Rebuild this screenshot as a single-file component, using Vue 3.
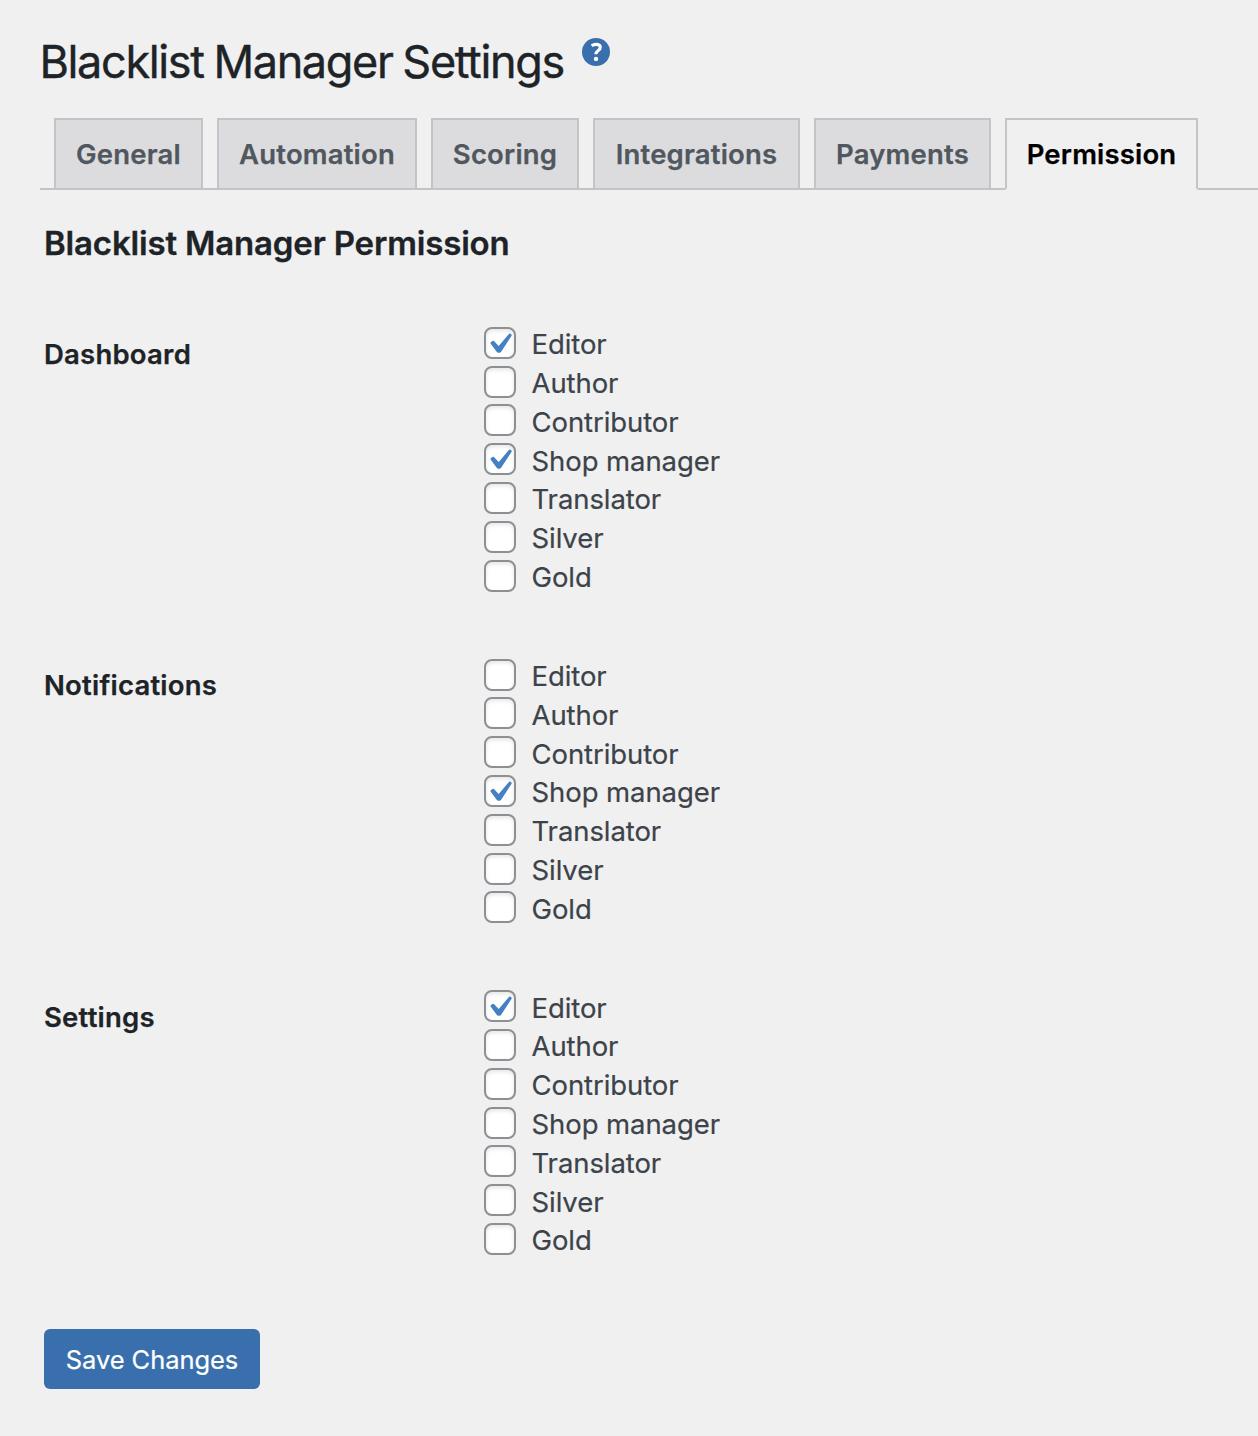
<script setup>
import { reactive } from 'vue'

const tabs = [
  { label: 'General', width: 149 },
  { label: 'Automation', width: 200 },
  { label: 'Scoring', width: 148 },
  { label: 'Integrations', width: 207 },
  { label: 'Payments', width: 177 },
  { label: 'Permission', width: 193, active: true },
]

const roles = ['Editor', 'Author', 'Contributor', 'Shop manager', 'Translator', 'Silver', 'Gold']

const sections = reactive([
  { title: 'Dashboard', allowed: ['Editor', 'Shop manager'] },
  { title: 'Notifications', allowed: ['Shop manager'] },
  { title: 'Settings', allowed: ['Editor'] },
])
</script>

<template>
  <main class="wrap">
    <header class="heading">
      <h1>Blacklist Manager Settings</h1>
      <a class="help" aria-label="Help">
        <svg width="28" height="28" viewBox="0 0 28 28">
          <circle cx="14" cy="14" r="14" fill="#3a6fad" />
          <path d="M9.6 7.7C11 6.8 12.4 6.4 14 6.4C16.6 6.4 18.3 7.4 18.3 9.4C18.3 12.6 13.9 12.3 13.9 16.3" fill="none" stroke="#fff" stroke-width="3.1" />
          <circle cx="14" cy="20.9" r="2.2" fill="#fff" />
        </svg>
      </a>
    </header>

    <nav class="tabs">
      <a v-for="tab in tabs" :key="tab.label" class="tab" :class="{ active: tab.active }" :style="{ width: tab.width + 'px' }">{{ tab.label }}</a>
    </nav>

    <form class="form" @submit.prevent>
      <h2>Blacklist Manager Permission</h2>
      <section v-for="section in sections" :key="section.title" class="section">
        <h3>{{ section.title }}</h3>
        <div class="roles">
          <label v-for="role in roles" :key="role" class="role">
            <input v-model="section.allowed" type="checkbox" :value="role" />
            <span class="box">
              <svg v-if="section.allowed.includes(role)" width="28" height="28" viewBox="0 0 28 28">
                <path d="M22.9 4.9Q23.5 4.2 24.2 4.6L25.4 5.4Q26 6 25.6 6.8L15.3 22.6Q14.6 23.8 13.4 23.8H12.4Q11.3 23.8 10.5 22.6L4.7 14.8Q4.2 13.9 5 13.1L6.4 12.1Q7.5 11.5 8.4 12.4L12.7 17.1Z" fill="#4580c4" />
              </svg>
            </span>
            <span class="name">{{ role }}</span>
          </label>
        </div>
      </section>
      <button class="save" type="submit">Save Changes</button>
    </form>
  </main>
</template>

<style>
body {
  background: #f0f0f0;
}
</style>

<style scoped>
.wrap {
  box-sizing: border-box;
  height: 1436px;
  padding: 36px 0 0 40px;
  overflow: hidden;
  background: #f0f0f0;
  color: #1d2327;
  font-family: Inter, "Liberation Sans", sans-serif;
}
.heading {
  display: flex;
  align-items: flex-start;
  height: 82px;
  gap: 17px;
}
h1, h2, h3 {
  margin: 0;
}
h1 {
  width: 525px;
  font-size: 45px;
  font-weight: 400;
  line-height: 52px;
  letter-spacing: -1.36px;
  word-spacing: -1.4px;
  text-indent: -0.5px;
  white-space: nowrap;
  -webkit-text-stroke: 0.4px currentColor;
}
.help {
  display: flex;
  margin-top: 2px;
}
.tabs {
  display: flex;
  gap: 14px;
  height: 70px;
  padding-left: 14px;
  border-bottom: 2px solid #c3c4c7;
}
.tab {
  box-sizing: border-box;
  flex: none;
  height: 70px;
  border: 2px solid #c3c4c7;
  border-bottom: 0;
  background: #dcdcde;
  color: #50575e;
  font-size: 27.5px;
  font-weight: 600;
  letter-spacing: 0.18px;
  line-height: 68px;
  text-align: center;
  white-space: nowrap;
  -webkit-text-stroke: 0.25px currentColor;
}
.tab.active {
  height: 72px;
  border-bottom: 2px solid #f0f0f0;
  background: #f0f0f0;
  color: #000;
}
.form {
  padding: 33px 0 0 4px;
}
h2 {
  height: 103.8px;
  font-size: 33px;
  font-weight: 600;
  line-height: 40px;
  letter-spacing: -0.17px;
  -webkit-text-stroke: 0.3px currentColor;
}
.section {
  display: flex;
  height: 331.72px;
}
h3 {
  width: 440px;
  padding-top: 8.8px;
  font-size: 27.5px;
  font-weight: 600;
  line-height: 36px;
  letter-spacing: 0.22px;
  -webkit-text-stroke: 0.25px currentColor;
}
.role {
  display: flex;
  height: 38.8px;
  gap: 16px;
}
.role input {
  position: absolute;
  opacity: 0;
}
.box {
  box-sizing: border-box;
  width: 32px;
  height: 32px;
  border: 2px solid #8c8f94;
  border-radius: 8px;
  background: #fff;
  box-shadow: inset 0 2px 4px rgba(0, 0, 0, 0.1);
}
.box svg {
  display: block;
}
.name {
  margin: -0.6px 0 0 -0.5px;
  color: #3c434a;
  font-size: 27.5px;
  line-height: 36px;
  letter-spacing: -0.08px;
  -webkit-text-stroke: 0.2px currentColor;
}
.save {
  display: block;
  width: 216px;
  height: 60px;
  margin-top: 7px;
  padding: 1px 0 0;
  border: 0;
  border-radius: 6px;
  background: #3a6fad;
  color: #fff;
  font-family: inherit;
  font-size: 25.5px;
  letter-spacing: -0.06px;
  line-height: 60px;
  -webkit-text-stroke: 0.2px currentColor;
}
</style>
